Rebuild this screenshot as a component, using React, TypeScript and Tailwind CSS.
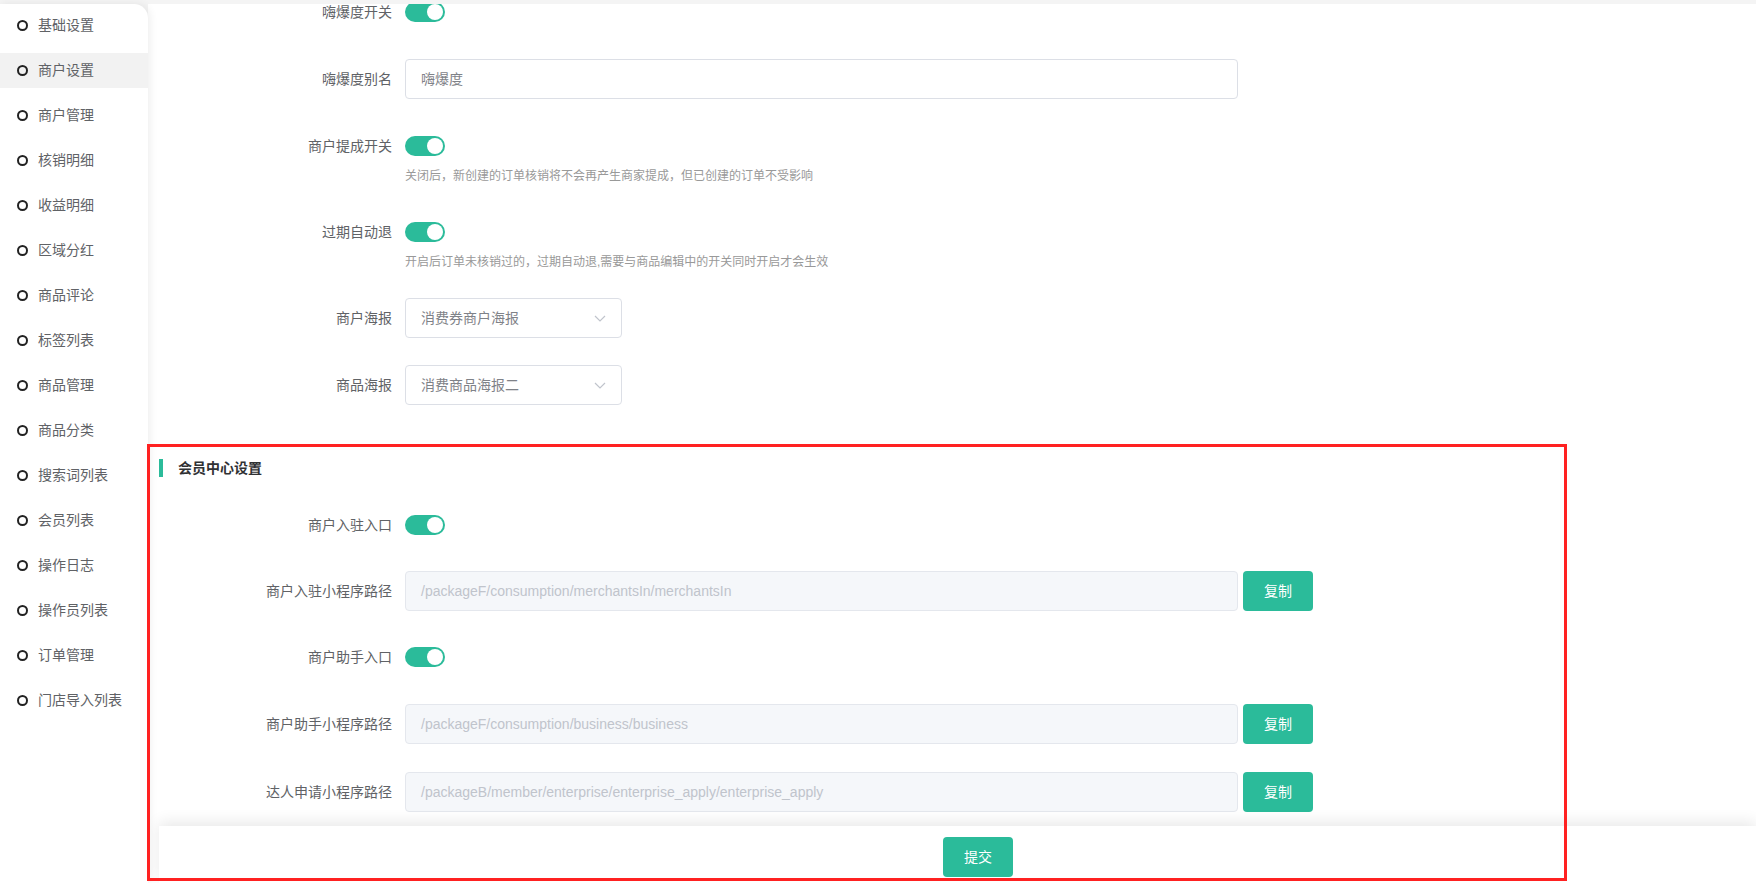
import type { ReactNode } from 'react'

/**
 * 商户设置页面
 * 左侧菜单 + 表单 + 底部提交栏
 */

const menus = [
  '基础设置',
  '商户设置',
  '商户管理',
  '核销明细',
  '收益明细',
  '区域分红',
  '商品评论',
  '标签列表',
  '商品管理',
  '商品分类',
  '搜索词列表',
  '会员列表',
  '操作日志',
  '操作员列表',
  '订单管理',
  '门店导入列表',
]

function Switch() {
  return (
    <div className="flex items-center justify-end w-[40px] h-[20px] rounded-full bg-[#2bbb9a] pr-[2px]">
      <div className="w-[16px] h-[16px] rounded-full bg-white" />
    </div>
  )
}

function FormItem({ label, children, className = '' }: { label: string; children: ReactNode; className?: string }) {
  return (
    <div className={`flex items-center h-[40px] ${className}`}>
      <label className="w-[257px] shrink-0 pr-[13px] text-right text-[14px] text-[#606266]">{label}</label>
      {children}
    </div>
  )
}

function Hint({ text }: { text: string }) {
  return <div className="pl-[257px] mt-[2px] mb-[28px] text-[12px] leading-[16px] text-[#999]">{text}</div>
}

function Select({ value }: { value: string }) {
  return (
    <div className="flex items-center justify-between w-[217px] h-[40px] px-[15px] border border-[#dcdfe6] rounded-[4px] text-[14px] text-[#7f8288]">
      <span>{value}</span>
      <svg width="12" height="12" viewBox="0 0 12 12" fill="none" stroke="#c0c4cc" strokeWidth="1.2">
        <path d="M1 4l5 5 5-5" />
      </svg>
    </div>
  )
}

function PathInput({ value }: { value: string }) {
  return (
    <div className="flex items-center gap-[5px]">
      <div className="flex items-center w-[833px] h-[40px] px-[15px] bg-[#f5f7fa] border border-[#e4e7ed] rounded-[4px] text-[14px] text-[#c0c4cc]">
        {value}
      </div>
      <button className="w-[70px] h-[40px] rounded-[4px] bg-[#2bbb9a] text-white text-[14px]">复制</button>
    </div>
  )
}

export default function App() {
  return (
    <div className="relative h-screen pt-[4px] flex bg-[#f4f4f4] font-['Liberation_Sans','Noto_Sans_CJK_SC',sans-serif] overflow-hidden">
      {/* 左侧菜单 */}
      <aside className="w-[148px] shrink-0 bg-white rounded-tr-[14px] pt-[4px] shadow-[2px_0_8px_rgba(0,0,0,0.07)] z-10">
        {menus.map((m) => (
          <div
            key={m}
            className={`flex items-center h-[35px] mb-[10px] pl-[17px] gap-[10px] text-[14px] text-[#606266] ${m === '商户设置' ? 'bg-[#f2f2f2]' : ''}`}
          >
            <span className="w-[11px] h-[11px] shrink-0 rounded-full border-2 border-[#222]" />
            {m}
          </div>
        ))}
      </aside>

      {/* 主体 */}
      <main className="flex-1 flex flex-col bg-white">
        <div className="flex-1 overflow-hidden">
          <div className="-mt-[12px]">
            <FormItem label="嗨爆度开关" className="mb-[27px]">
              <Switch />
            </FormItem>
            <FormItem label="嗨爆度别名" className="mb-[27px]">
              <div className="flex items-center w-[833px] h-[40px] px-[15px] border border-[#dcdfe6] rounded-[4px] text-[14px] text-[#7f8288]">
                嗨爆度
              </div>
            </FormItem>
            <FormItem label="商户提成开关">
              <Switch />
            </FormItem>
            <Hint text="关闭后，新创建的订单核销将不会再产生商家提成，但已创建的订单不受影响" />
            <FormItem label="过期自动退">
              <Switch />
            </FormItem>
            <Hint text="开启后订单未核销过的，过期自动退,需要与商品编辑中的开关同时开启才会生效" />
            <FormItem label="商户海报" className="mb-[27px]">
              <Select value="消费券商户海报" />
            </FormItem>
            <FormItem label="商品海报">
              <Select value="消费商品海报二" />
            </FormItem>

            {/* 会员中心设置 */}
            <div className="flex items-center h-[18px] mt-[54px] mb-[28px] pl-[11px] gap-[15px]">
              <span className="w-[4px] h-[18px] bg-[#2bbb9a]" />
              <span className="text-[14px] font-bold text-[#303133]">会员中心设置</span>
            </div>
            <FormItem label="商户入驻入口" className="mb-[26px]">
              <Switch />
            </FormItem>
            <FormItem label="商户入驻小程序路径" className="mb-[26px]">
              <PathInput value="/packageF/consumption/merchantsIn/merchantsIn" />
            </FormItem>
            <FormItem label="商户助手入口" className="mb-[27px]">
              <Switch />
            </FormItem>
            <FormItem label="商户助手小程序路径" className="mb-[28px]">
              <PathInput value="/packageF/consumption/business/business" />
            </FormItem>
            <FormItem label="达人申请小程序路径">
              <PathInput value="/packageB/member/enterprise/enterprise_apply/enterprise_apply" />
            </FormItem>
          </div>
        </div>

        {/* 底部提交 */}
        <div className="h-[57px] ml-[11px] pt-[11px] pl-[41px] flex justify-center bg-white shadow-[0_-4px_14px_rgba(0,0,0,0.09)] z-10">
          <button className="w-[70px] h-[40px] rounded-[4px] bg-[#2bbb9a] text-white text-[14px]">提交</button>
        </div>
      </main>

      {/* 标注框 */}
      <div className="absolute left-[147px] top-[444px] w-[1420px] h-[437px] border-[3px] border-[#ff2121] pointer-events-none z-20" />
    </div>
  )
}
